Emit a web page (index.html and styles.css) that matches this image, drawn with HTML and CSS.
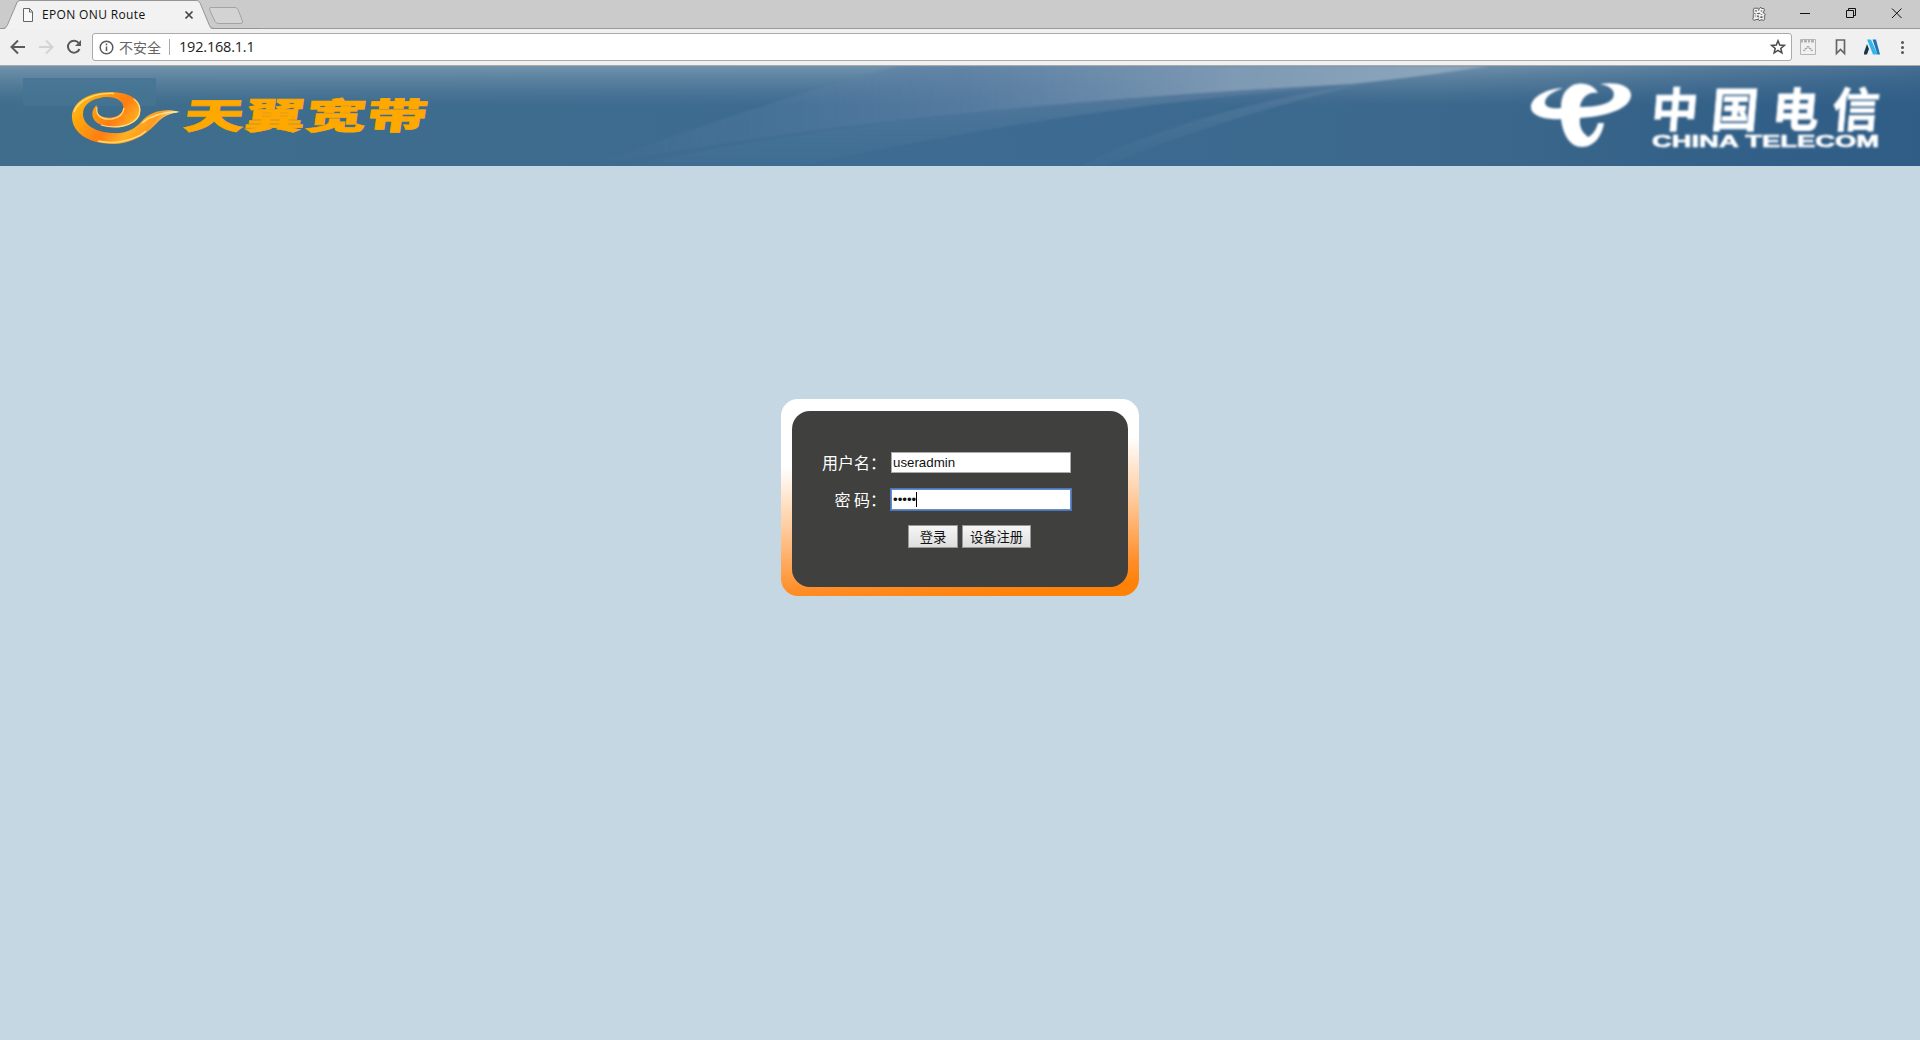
FILE: index.html
```html
<!DOCTYPE html>
<html lang="zh-CN">
<head>
<meta charset="utf-8">
<title>EPON ONU Route</title>
<link rel="stylesheet" href="styles.css">
</head>
<body>
<header class="tabs">
  <svg class="tab-shape" width="260" height="29" viewBox="0 0 260 29">
    <path d="M0 28.5H3Q6 28.5 7.500 25L17 2.500Q18 .5 20 .5H196Q199 .5 200 3L209.500 25.500Q211 28.500 214 28.500H260" fill="none" stroke="#949494"/>
    <path d="M4 29Q6.500 28.500 8 25L17.500 3Q18.500 1 20 1H196Q198.500 1 199.500 3L209 26Q210 29 213 29Z" fill="#f2f2f2"/>
    <path d="M211 7.500H235Q237 7.500 238 9.500L242.500 21Q243 23.500 241 23.500H218.500Q216 23.500 215 21.500L209.500 9.500Q209 7.500 211 7.500Z" fill="#d3d3d3" stroke="#a3a3a3"/>
    <path d="M23.500 8.500H29.500L32.500 11.500V21.500H23.500ZM29.500 8.500V12H32.500" fill="#fafafa" stroke="#666"/>
    <path d="M185.500 11.500L192.500 18.500M192.500 11.500L185.500 18.500" stroke="#444" stroke-width="1.700"/>
  </svg>
  <span class="tab-title">EPON ONU Route</span>
  <div class="window-controls">
    <span class="user-badge">路</span>
    <svg width="140" height="28" viewBox="0 0 140 28" fill="none" stroke="#111">
      <path d="M20 13.500H30M66.500 10.500H73.500V17.500H66.500ZM68.500 10V8.500H75.500V15.500H74M112 8.500L121.500 18M121.500 8.500L112 18"/>
    </svg>
  </div>
</header>
<nav class="toolbar">
  <svg class="nav-icons" width="92" height="36" viewBox="0 0 92 36" fill="none" stroke-width="2">
    <path d="M25 18H12.500M18 11.500L11.500 18L18 24.500" stroke="#5a5a5a"/>
    <path d="M39 18H51.500M46 11.500L52.500 18L46 24.500" stroke="#d3d3d3"/>
    <path d="M78.700 14A6 6 0 1 0 79.500 20" stroke="#5a5a5a"/><path d="M81 11V17H75Z" fill="#5a5a5a"/>
  </svg>
  <div class="address">
    <svg width="15" height="15" viewBox="0 0 15 15" fill="none" stroke="#5a5a5a" stroke-width="1.500"><circle cx="7.500" cy="7.500" r="6.300"/><path d="M7.500 6.500V11M7.500 3.500V5.200"/></svg>
    <span class="insecure">不安全</span><span class="divider"></span><span class="url">192.168.1.1</span>
    <svg class="star" width="16" height="16" viewBox="0 0 16 16"><path d="M8 1.800L9.700 6.100L14.300 6.400L10.800 9.400L11.900 13.900L8 11.400L4.100 13.900L5.200 9.400L1.700 6.400L6.300 6.100Z" fill="none" stroke="#4b4b4b" stroke-width="1.500"/></svg>
  </div>
  <svg class="extensions" width="128" height="36" viewBox="1792 29 128 36" fill="none">
    <path d="M1800.500 39.500H1815.500V54.500H1800.500Z" stroke="#b5b5b5"/><path d="M1801 41H1815" stroke="#b0b0b0" stroke-width="3" stroke-dasharray="2 1 3 1"/><path d="M1803 50.500H1805V48.500H1807V46.500H1809V48.500H1811V50.500H1813" stroke="#aaa"/>
    <path d="M1836.500 40H1844.500V53.500L1840.500 49.500L1836.500 53.500Z" stroke="#666" stroke-width="1.700"/>
    <path d="M1867 39.500H1871L1877.500 54.500H1873Z" fill="#35b5e5"/><path d="M1872.500 39.500H1876L1880 54.500H1877.500Z" fill="#1b75bb"/><path d="M1867 44L1869 49L1867 54.500H1864V52.500Z" fill="#17364f"/>
    <g fill="#555"><circle cx="1902.500" cy="42.500" r="1.500"/><circle cx="1902.500" cy="47.500" r="1.500"/><circle cx="1902.500" cy="52.500" r="1.500"/></g>
  </svg>
</nav>
<main>
  <svg class="banner" viewBox="0 66 1920 100" preserveAspectRatio="none">
    <defs>
      <linearGradient id="base"><stop stop-color="#3f6d8b"/><stop offset=".5" stop-color="#3d6b92"/><stop offset=".8" stop-color="#3b678b"/><stop offset="1" stop-color="#2f5d86"/></linearGradient>
      <linearGradient id="top" x2="0" y2="1"><stop stop-color="#8aa5ba" stop-opacity=".68"/><stop offset=".4" stop-color="#6487a5" stop-opacity="0"/></linearGradient>
      <linearGradient id="beam"><stop stop-color="#527ca0" stop-opacity="0"/><stop offset=".42" stop-color="#5d80a4" stop-opacity=".75"/><stop offset=".72" stop-color="#7e9ab4"/><stop offset="1" stop-color="#8fa9bd"/></linearGradient>
      <linearGradient id="ray" x2="0" y2="1"><stop stop-color="#607fa2"/><stop offset="1" stop-color="#47779b" stop-opacity=".25"/></linearGradient>
      <linearGradient id="fade"><stop stop-color="#2f5d86" stop-opacity="0"/><stop offset="1" stop-color="#2f5d86" stop-opacity=".65"/></linearGradient>
      <linearGradient id="gold" x2="1" y2=".35"><stop stop-color="#ffc52b"/><stop offset=".2" stop-color="#ffa90c"/><stop offset=".5" stop-color="#ff7d12"/><stop offset=".7" stop-color="#ffb020"/><stop offset=".85" stop-color="#ff9a1e"/><stop offset="1" stop-color="#ffe9a0"/></linearGradient>
      <filter id="soft" x="-5%" y="-10%" width="110%" height="120%"><feGaussianBlur stdDeviation=".9"/></filter>
      <filter id="haze"><feGaussianBlur stdDeviation="1.300"/></filter>
    </defs>
    <path fill="url(#base)" d="M0 66H1920V166H0Z"/>
    <path fill="url(#top)" d="M0 66H1920V166H0Z"/>
    <g filter="url(#haze)">
      <path fill="url(#beam)" d="M590 166Q900 108 1350 84Q1410 78 1490 66H900Q800 90 590 166Z"/>
      <path fill="url(#ray)" opacity=".75" d="M630 166Q880 108 1360 84Q1080 105 800 166Z"/>
      <path fill="url(#ray)" opacity=".65" d="M1080 166Q1190 110 1370 82Q1220 118 1105 166Z"/>
    </g>
    <path fill="url(#fade)" d="M1440 66H1920V166H1440Z"/>
    <path fill="#457493" opacity=".85" d="M23 78H156V106H23Z"/>
    <path fill="url(#gold)" d="M180 112C165 108 150 111 141 122C134 130 124 134 112 133C94 132 83 124 83 114C83 104 92 99 104 97C118 96 125 103 123 109C121 118 108 119 101 116C96 113 96 109 97 105C91 109 90 119 99 124C110 130 132 128 139 117C144 107 138 92 110 92C86 92 71 104 72 118C73 134 90 144 114 144C136 143 148 132 156 124C163 116 170 113 180 112Z"/>
    <path fill="none" stroke="#ffe998" stroke-width="1.300" opacity=".85" d="M74 112C79 99 96 93 114 93.500M97 107C95 117 104 120 112 119Q123 117 124 108M101 125C114 129 134 127 139 115Q142 105 134 99M98 141C114 145 136 140 146 131M142 123Q155 112 177 112"/>
    <text class="tianyi" transform="translate(182 129) skewX(-8)" textLength="244" lengthAdjust="spacingAndGlyphs">天翼宽带</text>
    <g fill="#fff" filter="url(#soft)">
      <path d="M1563 88C1543 89 1530 99 1531 108C1532 117 1548 120 1561 119C1563 135 1570 147 1582 147C1594 147 1602 136 1604 123H1598C1596 131 1591 136 1588 137C1582 132 1579 127 1580 118C1611 116 1632 107 1631 94C1629 84 1614 82 1600 84C1611 86 1616 91 1613 98C1610 104 1596 107 1580 107C1581 99 1587 91 1598 93C1594 85 1583 81 1573 85C1564 90 1561 97 1561 108C1550 109 1545 107 1545 102C1546 95 1555 91 1563 88Z"/>
      <text class="china" transform="translate(1650 127) skewX(-5)" textLength="228" lengthAdjust="spacing">中国电信</text>
      <text class="telecom" x="1652" y="147" textLength="227" lengthAdjust="spacingAndGlyphs">CHINA TELECOM</text>
    </g>
  </svg>
  <section class="login-card">
    <form class="login-form">
      <label for="user">用户名：</label><input id="user" value="useradmin">
      <label for="password">密 码：</label><div class="password" id="password"><span>•••••</span><i></i></div>
      <div class="actions"><button type="button">登录</button><button type="button">设备注册</button></div>
    </form>
  </section>
</main>
</body>
</html>
```
FILE: styles.css
```css
* { box-sizing: border-box; }
body { margin: 0; height: 1040px; overflow: hidden; display: flex; flex-direction: column; font-family: "Noto Sans", "Noto Sans CJK SC", sans-serif; background: #c5d7e2; }
.tabs { height: 29px; position: relative; flex: none; display: flex; justify-content: flex-end; background: #cbcbcb; border-bottom: 1px solid #999; }
.tab-shape { position: absolute; left: 0; top: 0; }
.tab-title { position: absolute; left: 42px; top: 6px; font: 12px/17px "Open Sans", "Noto Sans", sans-serif; letter-spacing: .35px; color: #111; white-space: nowrap; }
.window-controls { display: flex; }
.user-badge { width: 27px; padding-top: 7px; font: bold 12px/14px "Noto Sans CJK SC", sans-serif; color: #f5f5f5; text-shadow: 1px 0 #555, -1px 0 #555, 0 1px #555, 0 -1px #555; }
.toolbar { height: 37px; flex: none; display: flex; background: #f1f0f1; border-bottom: 1px solid #aaa; }
.nav-icons { flex: none; }
.address { flex: 1; height: 28px; margin-top: 4px; border: 1px solid #aaa; border-radius: 3px; background: #fff; display: flex; align-items: center; padding: 0 5px 0 6px; }
.insecure { margin-left: 5px; font: 14px/20px "Noto Sans CJK SC", sans-serif; color: #666; }
.divider { height: 16px; border-left: 1px solid #aaa; margin: 0 9px 0 8px; }
.url { font: 14.500px/20px "Open Sans", sans-serif; letter-spacing: -.2px; color: #222; }
.star { margin-left: auto; }
.extensions { flex: none; }
main { flex: 1; }
.banner { display: block; width: 100%; height: 100px; }
.tianyi { font: 900 36px "Noto Sans CJK SC", sans-serif; fill: #ffa800; stroke: #ffa800; stroke-width: .6; }
.china { font: 700 47px "Noto Sans CJK SC", sans-serif; stroke: #fff; stroke-width: .8; }
.telecom { font: 700 16px "Liberation Sans", sans-serif; stroke: #fff; stroke-width: .6; }
.login-card { width: 358px; height: 197px; margin: 233px auto 0; padding: 12px 11px 9px; border-radius: 17px; background: linear-gradient(175deg, #fff 30%, #ffc999 58%, #ff8b23 86%, #ff8208 94%); }
.login-form { height: 176px; border-radius: 18px; background: #40403e; display: grid; grid-template-columns: 94px 180px; grid-template-rows: 21px 21px 23px; column-gap: 5px; row-gap: 16px; padding-top: 41px; }
.login-form label { text-align: right; white-space: pre; color: #fff; font: 16px/20px "Noto Sans CJK SC", sans-serif; }
.login-form input, .password { width: 180px; height: 21px; border: 1px solid #aaa; padding: 0 1px; background: #fff; color: #111; font: 13.300px/18px "Liberation Sans", sans-serif; }
.password { display: flex; align-items: center; border-color: #648bd0; outline: 1px solid #4d75b9; }
.password i { width: 1px; height: 15px; background: #000; }
.actions { grid-column: 1 / -1; display: flex; gap: 4px; padding-left: 116px; margin-top: -1px; }
.actions button { height: 23px; width: 50px; padding: 0; border: 1px solid #999; background: linear-gradient(#f6f6f6, #dedede); color: #111; font: 13.300px/20px "Noto Sans CJK SC", sans-serif; }
.actions button + button { width: 69px; }
```
